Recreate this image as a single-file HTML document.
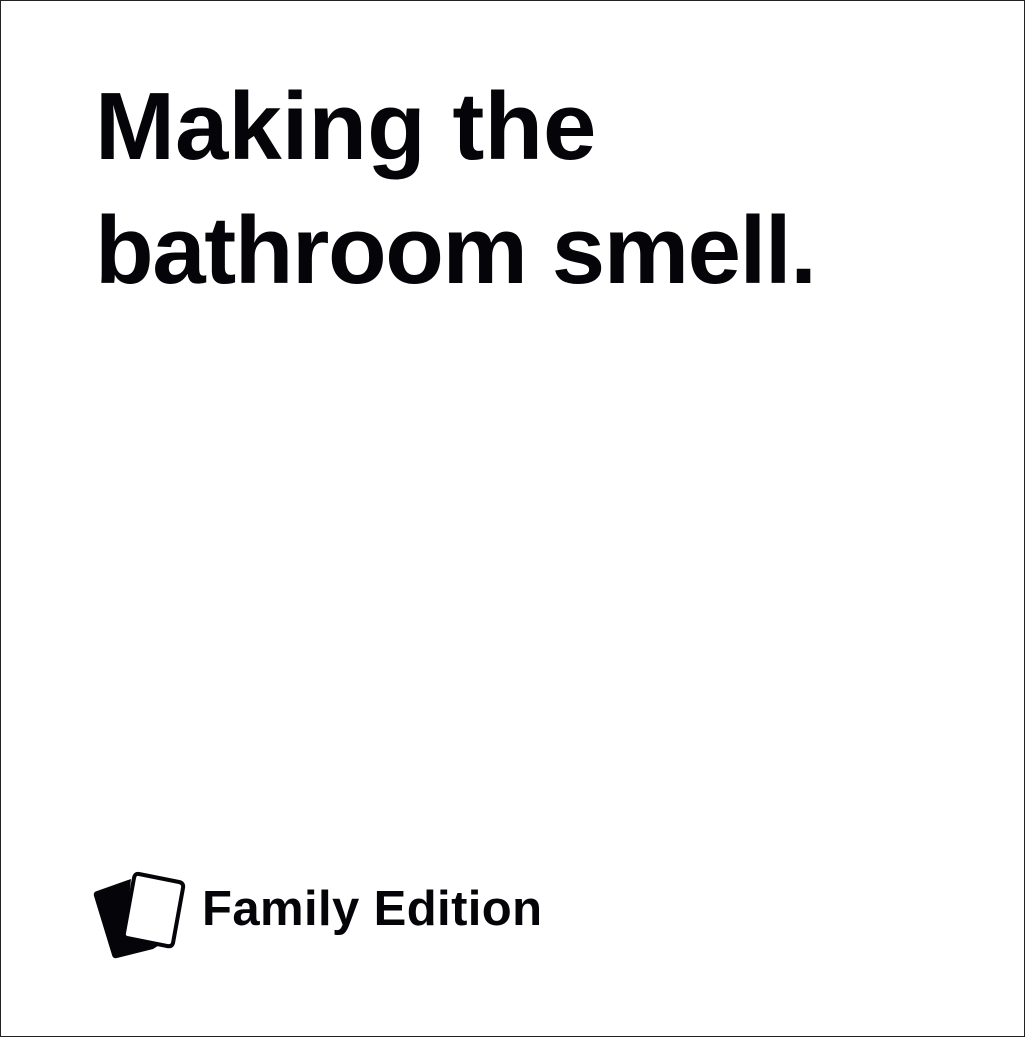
<!DOCTYPE html>
<html><head><style>
html,body{margin:0;padding:0;background:#fff}
.page{position:relative;width:1023px;height:1035px;border:1px solid #222;overflow:hidden;background:#fff}
.h{position:absolute;left:94px;top:64px;font:bold 96px/124px "Liberation Sans",sans-serif;color:#050509;margin:0;white-space:nowrap}
.h span{letter-spacing:-1.4px}
.f{position:absolute;left:201px;top:884px;font:bold 49px/49px "Liberation Sans",sans-serif;color:#050509;white-space:nowrap;letter-spacing:0.4px}
svg{position:absolute;left:0;top:0}
</style></head><body><div class="page">
<div class="h">Making the<br><span>bathroom smell.</span></div>
<svg width="1025" height="1037">
<path d="M96 890 L130 878 L124 936 L160 943 L152 948 L116 957 Q112 958 111 954 L93 895 Q92 891 96 890 Z" fill="#050509"/>
<path d="M138 873 L178 881 Q183 882 182 887 L172 942 Q171 946 166 945 L126 937 Q122 936 123 932 L133 877 Q134 872 138 873 Z" fill="#fff" stroke="#050509" stroke-width="4" stroke-linejoin="round"/>
</svg>
<div class="f">Family Edition</div>
</div></body></html>
